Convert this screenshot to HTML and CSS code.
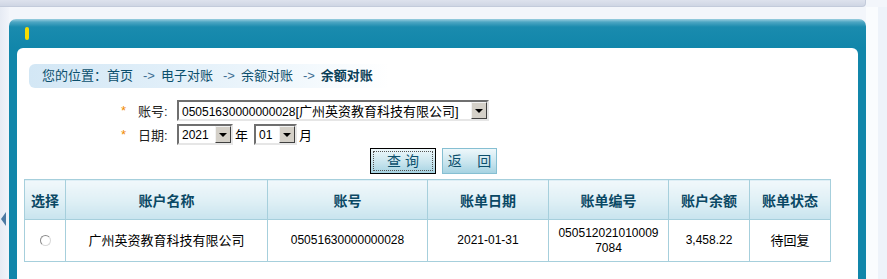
FILE: index.html
```html
<!DOCTYPE html>
<html lang="zh-CN">
  <head>
    <meta charset="UTF-8" />
    <title>余额对账</title>
    <link rel="stylesheet" href="styles.css">
  </head>
  <body>
    <div class="topbar"></div>
    <div class="layout">
      <div class="side">
        <span class="side-arrow"></span>
      </div>

      <div class="panel">
        <div class="panel-head">
          <span class="marker"></span>
        </div>
        <div class="panel-body">
          <div class="content">
            <div class="crumb">
              您的位置：首页<span class="sep">-&gt;</span>电子对账<span class="sep">-&gt;</span>余额对账<span class="sep">-&gt;</span><b>余额对账</b>
            </div>

            <form class="query" action="#">
              <div class="form-row">
                <span class="req">*</span>
                <label class="label">账号:</label>
                <div class="select select-account">
                  <span class="select-text"><span class="num">05051630000000028</span>[广州英资教育科技有限公司]</span>
                  <span class="select-btn"></span>
                </div>
              </div>
              <div class="form-row">
                <span class="req">*</span>
                <label class="label">日期:</label>
                <div class="select select-year">
                  <span class="select-text num">2021</span>
                  <span class="select-btn"></span>
                </div>
                <span class="unit">年</span>
                <div class="select select-month">
                  <span class="select-text num">01</span>
                  <span class="select-btn"></span>
                </div>
                <span class="unit">月</span>
              </div>
            </form>

            <div class="actions">
              <button type="button" class="btn btn-focus"><span>查&nbsp;询</span></button>
              <button type="button" class="btn btn-back"><span>返&nbsp;&nbsp;&nbsp;&nbsp;回</span></button>
            </div>

            <table class="grid">
              <thead>
                <tr>
                  <th class="c-sel">选择</th>
                  <th class="c-name">账户名称</th>
                  <th class="c-acct">账号</th>
                  <th class="c-date">账单日期</th>
                  <th class="c-no">账单编号</th>
                  <th class="c-bal">账户余额</th>
                  <th class="c-state">账单状态</th>
                </tr>
              </thead>
              <tbody>
                <tr>
                  <td><span class="radio"></span></td>
                  <td>广州英资教育科技有限公司</td>
                  <td class="num">05051630000000028</td>
                  <td class="num">2021-01-31</td>
                  <td class="num wrap">0505120210100097084</td>
                  <td class="num">3,458.22</td>
                  <td>待回复</td>
                </tr>
              </tbody>
            </table>
          </div>
        </div>
      </div>

      <div class="gutter"></div>
    </div>
  </body>
</html>
```

FILE: styles.css
```css
* {
  box-sizing: border-box;
}

html,
body {
  margin: 0;
  height: 100%;
  overflow: hidden;
}

body {
  font-family: "Liberation Sans", "Noto Sans CJK SC", sans-serif;
  font-size: 13px;
  color: #000;
  background-color: #f3f6fb;
}

.topbar {
  height: 7px;
  width: 866px;
  background: linear-gradient(#dde2ed, #cfd6e4);
  border-bottom: 1px solid #c3cbdb;
  border-right: 1px solid #c3cbdb;
  border-bottom-right-radius: 4px;
}

.layout {
  display: flex;
  height: calc(100% - 7px);
}

.side {
  width: 9px;
  flex: none;
  background: linear-gradient(90deg, #e6ebf4, #f1f4fa);
  padding-top: 205px;
}

.side-arrow {
  display: block;
  width: 0;
  height: 0;
  margin-left: 1px;
  border-top: 7px solid transparent;
  border-bottom: 7px solid transparent;
  border-right: 5px solid #4d7aa3;
}

.panel {
  width: 857px;
  flex: none;
  margin-top: 12px;
  display: flex;
  flex-direction: column;
}

.panel-head {
  height: 29px;
  border-radius: 7px 7px 0 0;
  background: linear-gradient(#9ccfe0 0, #4ea6c3 3px, #1a8bae 8px, #1186aa 100%);
  padding: 8px 0 0 16px;
}

.marker {
  display: block;
  width: 4px;
  height: 13px;
  border-radius: 2px;
  background-color: #f6dc00;
}

.panel-body {
  flex: 1;
  display: flex;
  background-color: #1186aa;
  padding: 0 8px;
}

.content {
  flex: 1;
  background-color: #fff;
  border-radius: 6px 6px 0 0;
  padding: 16px 0 0 12px;
}

.crumb {
  height: 24px;
  line-height: 24px;
  width: 360px;
  padding-left: 13px;
  border-radius: 6px 0 0 6px;
  color: #0b4f6c;
  background: linear-gradient(90deg, #d3e7f5 0, #e1eff9 140px, #f3f9fd 280px, #fff 360px);
  white-space: nowrap;
}

.crumb .sep {
  color: #3d6f93;
  padding: 0 6px 0 10px;
}

.crumb b {
  color: #0a3f58;
}

.query {
  padding: 12px 0 0 92px;
}

.form-row {
  display: flex;
  align-items: center;
  height: 21px;
  margin-bottom: 3px;
}

.req {
  color: #f08a00;
  width: 17px;
}

.label {
  width: 39px;
  color: #222;
}

.select {
  display: flex;
  align-items: center;
  height: 21px;
  background-color: #fff;
  border: 2px solid;
  border-color: #6f6f6f #e6e6e6 #e6e6e6 #6f6f6f;
  padding-left: 3px;
}

.select-text {
  flex: 1;
  white-space: nowrap;
}

.select-btn {
  position: relative;
  width: 16px;
  height: 17px;
  background-color: #d4d0c8;
  border: 1px solid;
  border-color: #f2f2f2 #404040 #404040 #f2f2f2;
}

.select-btn::after {
  content: "";
  position: absolute;
  left: 3px;
  top: 6px;
  border-left: 4px solid transparent;
  border-right: 4px solid transparent;
  border-top: 4px solid #000;
}

.select-account {
  width: 312px;
}

.select-year {
  width: 56px;
}

.select-month {
  width: 43px;
}

.unit {
  padding: 0 6px 0 2px;
}

.num {
  font-size: 12px;
}

.actions {
  display: flex;
  justify-content: center;
  gap: 6px;
  margin: 2px 0 5px -20px;
}

.btn {
  height: 26px;
  padding: 2px;
  font-family: inherit;
  font-size: 14px;
  color: #0b4f6c;
  border: 1px solid #86bfd2;
  background: linear-gradient(#eef8fb, #c6e3ed 60%, #a6d3e2);
  cursor: pointer;
  white-space: nowrap;
}

.btn span {
  display: block;
  height: 100%;
  line-height: 18px;
  border: 1px dotted transparent;
}

.btn-focus {
  width: 66px;
  border-color: #000;
}

.btn-focus span {
  border-color: #555;
}

.btn-back {
  width: 55px;
}

.grid {
  width: 807px;
  margin-left: -5px;
  border-collapse: collapse;
}

.grid th,
.grid td {
  border: 1px solid #a6cfdc;
  text-align: center;
  padding: 0 8px;
}

.grid th {
  height: 40px;
  padding: 0;
  font-size: 14px;
  color: #0a4864;
  background: linear-gradient(#f1f8fb, #deeff5 55%, #c8e4ee);
}

.grid td {
  height: 42px;
  line-height: 15px;
}

.grid .wrap {
  word-break: break-all;
}

.c-sel { width: 41px; }
.c-name { width: 202px; }
.c-acct { width: 160px; }
.c-date { width: 121px; }
.c-no { width: 120px; }
.c-bal { width: 81px; }
.c-state { width: 81px; }

.radio {
  display: inline-block;
  width: 11px;
  height: 11px;
  margin-top: 3px;
  border-radius: 50%;
  border: 1px solid #8a8a8a;
  border-right-color: #d8d8d8;
  border-bottom-color: #d8d8d8;
  background-color: #fff;
}

.gutter {
  flex: 1;
  background: linear-gradient(90deg, #fafcfe 0, #fafcfe 12px, #eef3fa 12px);
}
```
